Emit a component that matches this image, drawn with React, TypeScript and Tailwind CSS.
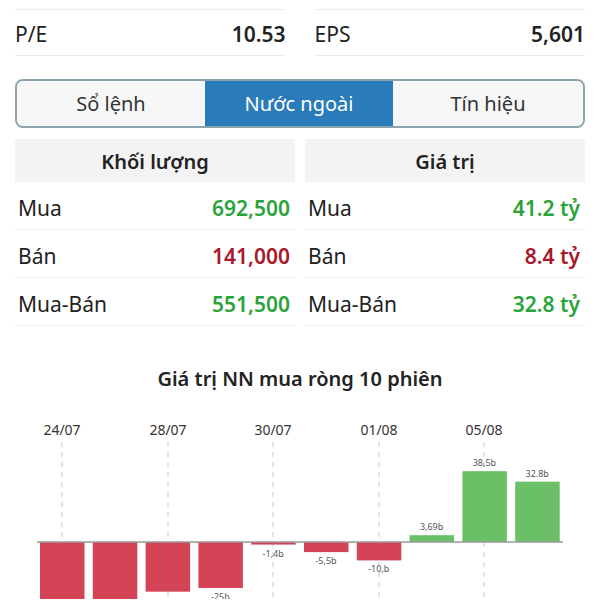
import React from "react";

const font = { fontFamily: '"Noto Sans", "Open Sans", Arial, sans-serif' };

/* ── Data ──────────────────────────────────────────────────── */

const volRows = [
  { label: "Mua", value: "692,500", tone: "up" },
  { label: "Bán", value: "141,000", tone: "down" },
  { label: "Mua-Bán", value: "551,500", tone: "up" },
];

const valRows = [
  { label: "Mua", value: "41.2 tỷ", tone: "up" },
  { label: "Bán", value: "8.4 tỷ", tone: "down" },
  { label: "Mua-Bán", value: "32.8 tỷ", tone: "up" },
];

// net foreign buy value, 10 sessions (billions); first two run off the bottom
const bars = [
  { v: -45, label: "" },
  { v: -48, label: "" },
  { v: -27, label: "" },
  { v: -25, label: "-25b" },
  { v: -1.4, label: "-1,4b" },
  { v: -5.5, label: "-5,5b" },
  { v: -10, label: "-10,b" },
  { v: 3.69, label: "3,69b" },
  { v: 38.5, label: "38,5b" },
  { v: 32.8, label: "32.8b" },
];

const dates = [
  { x: 62, d: "24/07" },
  { x: 168, d: "28/07" },
  { x: 273, d: "30/07" },
  { x: 379, d: "01/08" },
  { x: 484, d: "05/08" },
];

/* ── Pieces ────────────────────────────────────────────────── */

function StatCell({ label, value }: { label: string; value: string }) {
  return (
    <div className="flex h-[47px] items-center justify-between border-y border-[#ececec] pt-[5px] text-[21px] text-[#222]">
      <span>{label}</span>
      <span className="font-semibold">{value}</span>
    </div>
  );
}

function FlowTable({
  title,
  rows,
}: {
  title: string;
  rows: { label: string; value: string; tone: string }[];
}) {
  return (
    <div>
      <div className="flex h-[43px] items-center justify-center bg-[#f3f3f3] pt-[3px] text-[20px] font-semibold text-[#222]">
        {title}
      </div>
      {rows.map((r) => (
        <div
          key={r.label}
          className="flex h-[48px] items-center justify-between border-b border-[#eeeeee] pl-[3px] pr-[5px] pt-[6px] text-[21px]"
        >
          <span className="text-[#222]">{r.label}</span>
          <span
            className={
              r.tone === "up"
                ? "font-semibold text-[#2aa33a]"
                : "font-semibold text-[#a8182b]"
            }
          >
            {r.value}
          </span>
        </div>
      ))}
    </div>
  );
}

function NetChart() {
  const base = 143; // baseline y inside svg (page y 543)
  const scale = 1.84;
  return (
    <svg width={600} height={200} viewBox="0 0 600 200" className="block">
      {dates.map((t) => (
        <g key={t.d}>
          <text
            x={t.x}
            y={36}
            textAnchor="middle"
            fontSize={14}
            fill="#333"
            style={font}
          >
            {t.d}
          </text>
          <line
            x1={t.x}
            y1={43}
            x2={t.x}
            y2={200}
            stroke="#c8c8c8"
            strokeWidth={1}
            strokeDasharray="5 5"
          />
        </g>
      ))}
      {bars.map((b, i) => {
        const x = 40 + i * 52.8;
        const h = Math.max(2, Math.abs(b.v) * scale);
        const pos = b.v >= 0;
        const y = pos ? base - h : base;
        return (
          <g key={i}>
            <rect
              x={x}
              y={y}
              width={44.5}
              height={h}
              fill={pos ? "#6bbf67" : "#d44457"}
            />
            {b.label && (
              <text
                x={x + 22}
                y={pos ? y - 5 : y + h + 12}
                textAnchor="middle"
                fontSize={9}
                fill="#555"
                style={font}
              >
                {b.label}
              </text>
            )}
          </g>
        );
      })}
      <line x1={37} y1={base} x2={563} y2={base} stroke="#9a9a9a" strokeWidth={1.5} />
    </svg>
  );
}

/* ── App ───────────────────────────────────────────────────── */

export default function App() {
  return (
    <div className="h-[600px] w-[600px] overflow-hidden bg-white" style={font}>
      <div className="px-[15px] pt-[9px]">
        {/* P/E + EPS */}
        <div className="grid grid-cols-2 gap-[29px]">
          <StatCell label="P/E" value="10.53" />
          <StatCell label="EPS" value="5,601" />
        </div>

        {/* Tabs */}
        <div className="mt-[23px] grid h-[49px] grid-cols-[188px_188px_1fr] overflow-hidden rounded-[8px] border-2 border-[#8aa3ad] text-[20px]">
          <div className="flex items-center justify-center bg-[#f7f7f7] text-[#333]">
            Sổ lệnh
          </div>
          <div className="flex items-center justify-center bg-[#2a7bba] text-white">
            Nước ngoài
          </div>
          <div className="flex items-center justify-center bg-[#f7f7f7] text-[#333]">
            Tín hiệu
          </div>
        </div>

        {/* Foreign flow tables */}
        <div className="mt-[11px] grid grid-cols-2 gap-[10px]">
          <FlowTable title="Khối lượng" rows={volRows} />
          <FlowTable title="Giá trị" rows={valRows} />
        </div>
      </div>

      {/* Chart */}
      <div className="mt-[38px] text-center text-[20px] font-semibold text-[#222]">
        Giá trị NN mua ròng 10 phiên
      </div>
      <div className="mt-[5px]">
        <NetChart />
      </div>
    </div>
  );
}
